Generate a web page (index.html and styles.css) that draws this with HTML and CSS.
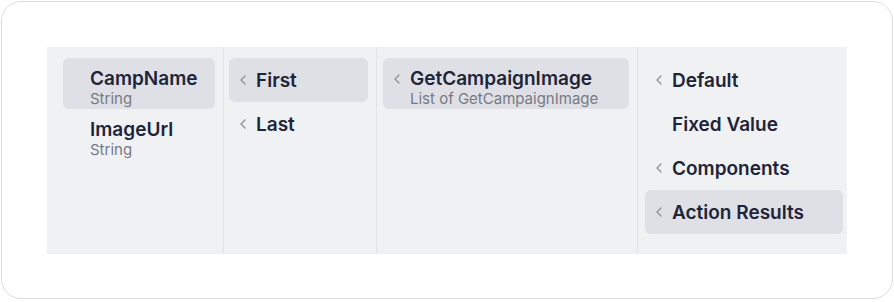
FILE: index.html
```html
<!DOCTYPE html>
<html lang="en">
<head>
  <meta charset="UTF-8">
  <title>Value Picker</title>
  <link rel="stylesheet" href="styles.css">
</head>
<body>
  <div class="card">
    <div class="picker">
      <div class="column col-fields">
        <div class="item active">
          <span class="chevron"></span>
          <div class="label">
            <div class="title">CampName</div>
            <div class="sub">String</div>
          </div>
        </div>
        <div class="item">
          <span class="chevron"></span>
          <div class="label">
            <div class="title">ImageUrl</div>
            <div class="sub">String</div>
          </div>
        </div>
      </div>

      <div class="column col-pos">
        <div class="item single active">
          <span class="chevron"><svg width="7" height="12" viewBox="0 0 7 12"><polyline points="5,2 1,6 5,10"/></svg></span>
          <div class="title">First</div>
        </div>
        <div class="item single">
          <span class="chevron"><svg width="7" height="12" viewBox="0 0 7 12"><polyline points="5,2 1,6 5,10"/></svg></span>
          <div class="title">Last</div>
        </div>
      </div>

      <div class="column col-action">
        <div class="item active">
          <span class="chevron"><svg width="7" height="12" viewBox="0 0 7 12"><polyline points="5,2 1,6 5,10"/></svg></span>
          <div class="label">
            <div class="title">GetCampaignImage</div>
            <div class="sub">List of GetCampaignImage</div>
          </div>
        </div>
      </div>

      <div class="column col-source">
        <div class="item single">
          <span class="chevron"><svg width="7" height="12" viewBox="0 0 7 12"><polyline points="5,2 1,6 5,10"/></svg></span>
          <div class="title">Default</div>
        </div>
        <div class="item single">
          <span class="chevron"></span>
          <div class="title">Fixed Value</div>
        </div>
        <div class="item single">
          <span class="chevron"><svg width="7" height="12" viewBox="0 0 7 12"><polyline points="5,2 1,6 5,10"/></svg></span>
          <div class="title">Components</div>
        </div>
        <div class="item single active">
          <span class="chevron"><svg width="7" height="12" viewBox="0 0 7 12"><polyline points="5,2 1,6 5,10"/></svg></span>
          <div class="title">Action Results</div>
        </div>
      </div>
    </div>
  </div>
</body>
</html>
```

FILE: styles.css
```css
body {
  margin: 0;
  font-family: Inter, "Noto Sans", sans-serif;
  background-color: #ffffff;
  color: #1e2538;
}
.card {
  margin: 1px;
  height: 298px;
  box-sizing: border-box;
  border: 1px solid #dcdee2;
  border-radius: 20px;
  padding: 45px 45px 0 45px;
}
.picker {
  display: flex;
  width: 800px;
  height: 207px;
  background-color: #f0f1f3;
}
.column {
  box-sizing: border-box;
  padding: 11px 8px 0 6px;
  border-right: 1px solid #e2e4e8;
}
.column:last-child {
  border-right: none;
  padding-right: 4px;
}
.col-fields {
  width: 177px;
  padding-left: 16px;
}
.col-pos {
  width: 153px;
  padding-left: 5px;
}
.col-action {
  width: 261px;
}
.col-source {
  flex: 1;
  padding-left: 7px;
}
.item {
  display: flex;
  align-items: flex-start;
  height: 51px;
  box-sizing: border-box;
  padding: 9px 11px 0 11px;
  border-radius: 6px;
}
.item.single {
  height: 44px;
  align-items: center;
  padding-top: 0;
}
.item.active {
  background-color: #dfe0e5;
}
.chevron {
  display: flex;
  align-items: center;
  width: 16px;
  height: 23px;
  flex-shrink: 0;
}
.chevron svg {
  fill: none;
  stroke: #9397a0;
  stroke-width: 1.5;
  stroke-linecap: round;
  stroke-linejoin: round;
}
.title {
  font-size: 19px;
  font-weight: 600;
  line-height: 23px;
}
.sub {
  font-size: 15px;
  line-height: 18px;
  color: #767a83;
}
```
